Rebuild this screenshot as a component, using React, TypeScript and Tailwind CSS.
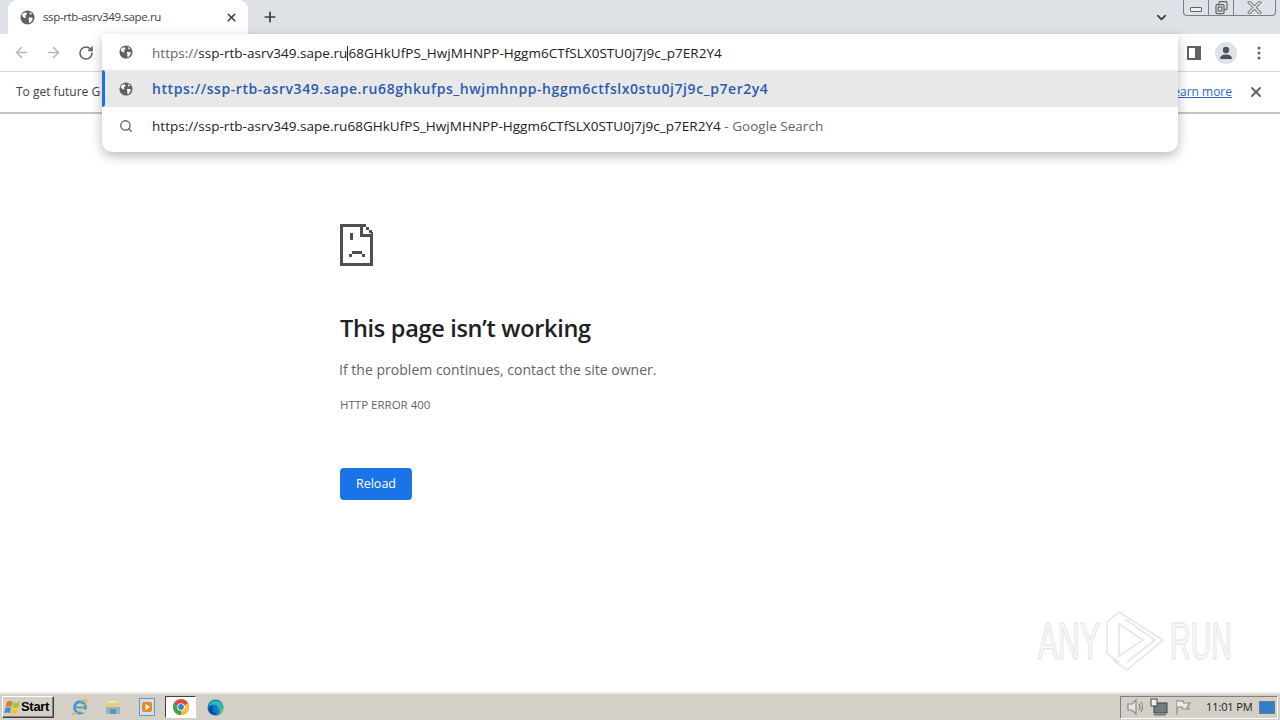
import { ArrowLeft, ArrowRight, RotateCw, Search, X, Plus, ChevronDown } from "lucide-react";

const font = { fontFamily: '"Open Sans", "Noto Sans", sans-serif' };

function Globe({ size = 14, color = "#5f6368" }: { size?: number; color?: string }) {
  return (
    <svg width={size} height={size} viewBox="0 0 16 16" className="shrink-0">
      <circle cx="8" cy="8" r="7.5" fill={color} />
      <path d="M3 3.5 L6.5 2.5 L7.5 4.5 L5.5 6 L6.5 8 L4.5 8.5 L2 6 Z M9 8 L13 8 L13.5 10 L10.5 14 L9.5 13 L9.5 10.5 Z M10 2 L13 4 L11 5 Z" fill="#ffffff" />
    </svg>
  );
}

function SadPage() {
  return (
    <svg width="34" height="42" viewBox="0 0 34 42" fill="#4f4f4f" shapeRendering="crispEdges">
      <path d="M0 0 H20 V3 H3 V39 H30 V13 H33 V42 H0 Z" />
      <path d="M20 0 H23 V10 H33 V13 H20 Z" />
      <rect x="23" y="0" width="3" height="3" />
      <rect x="26" y="3" width="3" height="3" />
      <rect x="29" y="6" width="3" height="3" />
      <rect x="31" y="8" width="2" height="3" />
      <rect x="10" y="9" width="3" height="7" />
      <rect x="9" y="30" width="3" height="3" />
      <rect x="12" y="27" width="10" height="3" />
      <rect x="22" y="30" width="3" height="3" />
    </svg>
  );
}

function StartFlag() {
  return (
    <svg width="17" height="15" viewBox="0 0 19 17" className="shrink-0">
      <path d="M3 2 Q6 0 9.5 2 L8 8 Q5 6.4 1.6 8 Z" fill="#e8732a" />
      <path d="M10.5 2.4 Q14 4 18 1.6 L16.5 8 Q12.8 9.8 9.2 8.2 Z" fill="#a5c63b" />
      <path d="M1.4 9 Q5 7.4 7.8 9 L6.4 15 Q3.4 13.4 0 15 Z" fill="#3f8fd8" />
      <path d="M9 9.2 Q12.6 10.8 16.2 9 L15 15 Q11.4 16.6 7.6 15 Z" fill="#f5c533" />
    </svg>
  );
}

function IEIcon() {
  return (
    <svg width="18" height="18" viewBox="0 0 18 18">
      <circle cx="9" cy="9.5" r="5.6" fill="none" stroke="#3d96d8" strokeWidth="2.6" />
      <rect x="5" y="8.6" width="9" height="1.8" fill="#3d96d8" />
      <rect x="10" y="11.6" width="6" height="3" fill="#d4d0c8" />
      <path d="M2 15 Q0 17 3 16.5 Q9 14 15 5 Q17 1.5 14 1.8 Q12 2 10 3.5" fill="none" stroke="#e3b23c" strokeWidth="1.2" />
    </svg>
  );
}

function FolderIcon() {
  return (
    <svg width="16" height="16" viewBox="0 0 16 16">
      <rect x="2" y="2" width="10" height="4" fill="#f3e3a8" />
      <rect x="1" y="4" width="14" height="11" fill="#e9cf7d" />
      <rect x="1" y="8" width="14" height="7" fill="#8fb7c9" />
      <rect x="5" y="10" width="6" height="5" fill="#5f93ae" />
    </svg>
  );
}

function MediaIcon() {
  return (
    <svg width="16" height="18" viewBox="0 0 16 18">
      <rect x="0.5" y="0.5" width="15" height="17" fill="#cfe0f0" stroke="#6a93c4" />
      <rect x="3" y="4" width="10" height="10" rx="2" fill="#ea8a1f" />
      <path d="M6.5 6 L11 9 L6.5 12 Z" fill="#fff" />
    </svg>
  );
}

function ChromeIcon() {
  return (
    <svg width="16" height="16" viewBox="0 0 16 16">
      <circle cx="8" cy="8" r="8" fill="#e1483a" />
      <path d="M8 8 L1.1 4 A8 8 0 0 0 8 16 Z" fill="#3aa757" />
      <path d="M8 8 L15 4.2 A8 8 0 0 1 8 16 Z" fill="#fbc02d" />
      <circle cx="8" cy="8" r="3.8" fill="#fff" />
      <circle cx="8" cy="8" r="2.9" fill="#3f7fe0" />
    </svg>
  );
}

function EdgeIcon() {
  return (
    <svg width="17" height="17" viewBox="0 0 17 17">
      <circle cx="8.5" cy="8.5" r="8" fill="#1479c9" />
      <path d="M1.5 6 A8 8 0 0 1 16.5 8.5 Q16.5 11 13 11 Q10 11 11.5 8.5 Q9.5 5 5.5 5.5 Q3 6 1.5 6 Z" fill="#30b8a8" />
      <path d="M16.5 9 Q15.5 14 11 16 Q12.5 13.5 13 11 Q15.5 11 16.5 9 Z" fill="#62cf62" />
      <path d="M6 6.5 Q4.5 12 10 16.2 Q3 16.5 1 10 Q2.5 7 6 6.5 Z" fill="#0d4f9c" />
    </svg>
  );
}

const URL_TAIL = "68GHkUfPS_HwjMHNPP-Hggm6CTfSLX0STU0j7j9c_p7ER2Y4";

function Omnibox() {
  return (
    <div className="absolute left-[102px] top-[34px] z-20 w-[1076px] h-[118px] bg-white rounded-b-[10px] shadow-[0_4px_12px_rgba(0,0,0,0.28)] text-[13.5px] tracking-[0.03px] text-[#202124]">
      <div className="h-[36px] flex items-center pl-[17px]">
        <Globe />
        <span className="ml-[19px] mt-[2px]">
          <span className="text-[#5f6368]">https://</span>ssp-rtb-asrv349.sape.ru
        </span>
        <span className="w-px h-[15px] bg-[#202124] mt-[2px]" />
        <span className="mt-[2px]">{URL_TAIL}</span>
      </div>
      <div className="relative h-[37px] bg-[#e8e8e8] flex items-center pl-[17px]">
        <div className="absolute left-0 top-0 bottom-0 w-[3px] bg-[#1a73e8] rounded-r-[3px]" />
        <Globe />
        <span className="ml-[19px] text-[14px] font-semibold text-[#2b5cad] tracking-[0.56px]">
          https://ssp-rtb-asrv349.sape.ru68ghkufps_hwjmhnpp-hggm6ctfslx0stu0j7j9c_p7er2y4
        </span>
      </div>
      <div className="h-[37px] flex items-center pl-[17px]">
        <Search size={14} color="#5f6368" strokeWidth={2.2} className="shrink-0" />
        <span className="ml-[19px] mt-[2px]">
          https://ssp-rtb-asrv349.sape.ru{URL_TAIL}
          <span className="text-[#5f6368]"> - Google Search</span>
        </span>
      </div>
    </div>
  );
}

export default function App() {
  return (
    <div className="relative w-[1280px] h-[720px] overflow-hidden bg-white flex flex-col" style={font}>
      {/* tab strip */}
      <div className="h-[34px] shrink-0 bg-[#dee1e6] flex items-end pl-2 relative">
        <div className="w-[240px] h-[34px] bg-white rounded-t-[9px] flex items-center pl-[12px] pr-[10px] text-[#3c4043] text-[11.5px] tracking-[-0.37px]">
          <Globe size={15} />
          <span className="ml-[8px] flex-1">ssp-rtb-asrv349.sape.ru</span>
          <X size={13} color="#3c4043" strokeWidth={3} />
        </div>
        <div className="ml-[14px] h-[34px] flex items-center">
          <Plus size={16} color="#3c4043" strokeWidth={2.6} />
        </div>
        <div className="ml-auto h-[34px] flex items-center mr-[111px]">
          <ChevronDown size={15} color="#3c4043" strokeWidth={3} />
        </div>
        <div className="absolute right-[4px] top-0 h-[16px] w-[93px] flex border border-t-0 border-[#7a7f87] rounded-b-[4px] bg-[#dee1e6]">
          <div className="w-[25px] border-r border-[#7a7f87] flex items-center justify-center">
            <div className="w-[12px] h-[5px] border border-[#5f6368] rounded-[1px] bg-[#eef0f3] mt-[3px]" />
          </div>
          <div className="w-[25px] border-r border-[#7a7f87] flex items-center justify-center">
            <svg width="13" height="14" viewBox="0 0 13 14" fill="#dee1e6" stroke="#5f6368" strokeWidth="1.2">
              <rect x="4" y="0.6" width="8" height="8" rx="1" />
              <rect x="1" y="3.6" width="8" height="9" rx="1" />
              <rect x="3.2" y="6" width="3.6" height="4" />
            </svg>
          </div>
          <div className="flex-1 flex items-center justify-center">
            <svg width="15" height="13" viewBox="0 0 15 13" fill="none" strokeLinecap="square">
              <path d="M2.5 1.5 L12.5 11.5 M12.5 1.5 L2.5 11.5" stroke="#74787e" strokeWidth="3.4" />
              <path d="M2.5 1.5 L12.5 11.5 M12.5 1.5 L2.5 11.5" stroke="#eef0f3" strokeWidth="1.4" />
            </svg>
          </div>
        </div>
      </div>
      {/* toolbar */}
      <div className="h-[38px] shrink-0 bg-white border-b border-[#d5d7da] flex items-center pl-[13px] pr-[19px]">
        <ArrowLeft size={17} color="#b4b7bb" strokeWidth={2.2} />
        <ArrowRight size={17} color="#b4b7bb" strokeWidth={2.2} className="ml-[15px]" />
        <RotateCw size={16} color="#5f6368" strokeWidth={2.4} className="ml-[16px]" />
        <div className="ml-auto flex items-center">
          <div className="w-[14px] h-[14px] border-[2.5px] border-[#5f6368] border-r-[6px]" />
          <div className="ml-[14px] w-[22px] h-[22px] rounded-full bg-[#dee1e6] flex items-center justify-center overflow-hidden">
            <svg width="14" height="14" viewBox="0 0 14 14" fill="#4a5264">
              <circle cx="7" cy="4" r="3.2" />
              <path d="M1 13 Q1 8.5 7 8.5 Q13 8.5 13 13 Z" />
            </svg>
          </div>
          <svg width="4" height="14" viewBox="0 0 4 14" fill="#5f6368" className="ml-[20px]">
            <circle cx="2" cy="2" r="1.5" />
            <circle cx="2" cy="7" r="1.5" />
            <circle cx="2" cy="12" r="1.5" />
          </svg>
        </div>
      </div>
      {/* info bar */}
      <div className="h-[42px] shrink-0 bg-white border-b-2 border-[#c4c4c4] flex items-center pl-[16px] pr-[16px] text-[12px] text-[#3c4043]">
        <span>To get future G</span>
        <a className="ml-auto text-[#2a66c9] underline">Learn more</a>
        <X size={16} color="#5f6368" strokeWidth={2.8} className="ml-[16px]" />
      </div>
      <Omnibox />
      {/* page */}
      <main className="flex-1 pl-[340px] pt-[110px] relative">
        <SadPage />
        <h1 className="mt-[46px] text-[23.5px] leading-[32px] font-semibold text-[#202124] tracking-[-0.3px]">This page isn’t working</h1>
        <p className="mt-[16px] -ml-px text-[14px] leading-[20px] tracking-[0.02px] text-[#5f6368]">If the problem continues, contact the site owner.</p>
        <p className="mt-[18px] text-[11.5px] leading-[14px] text-[#5f6368]">HTTP ERROR 400</p>
        <button className="mt-[56px] block w-[72px] h-[32px] pt-px rounded-[4px] bg-[#1a73e8] text-white text-[12.5px]">Reload</button>
        <div className="absolute left-[1038px] top-[496px] h-[62px] flex items-center text-[52px] leading-none text-[#f8f8f8] [-webkit-text-stroke:1px_#e4e4e4] [text-shadow:0_0_3px_#eeeeee]" style={{ fontFamily: '"Liberation Sans", sans-serif' }}>
          <span className="scale-x-[0.58] origin-left w-[67px]">ANY</span>
          <svg width="60" height="62" viewBox="0 0 60 62" fill="none" stroke="#e6e6e6" strokeWidth="1.6">
            <path d="M14 2 L58 30 L22 60 L8 50" />
            <path d="M14 2 L2 12 V44 L14 52" />
            <path d="M14 14 V46 L38 30 Z" />
            <path d="M20 9 L50 30 L22 52" />
          </svg>
          <span className="scale-x-[0.55] origin-left ml-[5px]">RUN</span>
        </div>
      </main>
      {/* taskbar */}
      <footer className="h-[28px] shrink-0 bg-[#d4d0c8] border-t-2 border-t-[#ece9e2] flex items-center text-black">
        <div className="ml-[2px] w-[52px] h-[22px] bg-[#d4d0c8] border border-t-white border-l-white border-r-[#404040] border-b-[#404040] shadow-[inset_-1px_-1px_0_#808080] flex items-center pl-[1px] text-[13px] font-bold tracking-[-0.3px]" style={{ fontFamily: '"Liberation Sans", sans-serif' }}>
          <StartFlag />
          <span>Start</span>
        </div>
        <div className="ml-[17px] w-[18px] flex justify-center"><IEIcon /></div>
        <div className="ml-[15px] w-[18px] flex justify-center"><FolderIcon /></div>
        <div className="ml-[16px] w-[18px] flex justify-center"><MediaIcon /></div>
        <div className="ml-[9px] w-[31px] h-[22px] bg-white border border-t-[#404040] border-l-[#404040] border-r-white border-b-white flex items-center justify-center"><ChromeIcon /></div>
        <div className="ml-[10px] w-[18px] flex justify-center"><EdgeIcon /></div>
        <div className="ml-auto mr-[2px] w-[158px] h-[23px] border border-t-[#808080] border-l-[#808080] border-r-white border-b-white flex items-center pl-[5px]">
          <svg width="20" height="18" viewBox="0 0 20 18" fill="none" stroke="#8a8a8a" strokeWidth="1.2">
            <path d="M2 6 H6 L10 2 V16 L6 12 H2 Z" fill="#e8e6e0" />
            <path d="M13 6 Q15 9 13 12 M15 4 Q18 9 15 14" />
          </svg>
          <svg width="20" height="18" viewBox="0 0 20 18" className="ml-[3px]">
            <rect x="5" y="5" width="13" height="10" fill="#6f7f80" stroke="#444" />
            <rect x="5" y="16" width="12" height="1.5" fill="#777" />
            <rect x="2" y="1" width="6" height="7" fill="#f0eee8" stroke="#444" />
          </svg>
          <svg width="18" height="18" viewBox="0 0 18 18" fill="none" stroke="#8a8a8a" strokeWidth="1.2" className="ml-[5px]">
            <path d="M3 2 V17" />
            <path d="M3 3 H9 L10 5 H16 L13 9 L15 11 H9 L8 9 H3" fill="#eeeae2" />
          </svg>
          <span className="ml-[14px] text-[11px] tracking-[-0.1px] text-[#1a1a1a] whitespace-nowrap">11:01 PM</span>
          <div className="ml-[6px] w-[16px] h-[13px] border border-[#6f7c88] bg-[#2f7ed0]" />
        </div>
      </footer>
    </div>
  );
}
